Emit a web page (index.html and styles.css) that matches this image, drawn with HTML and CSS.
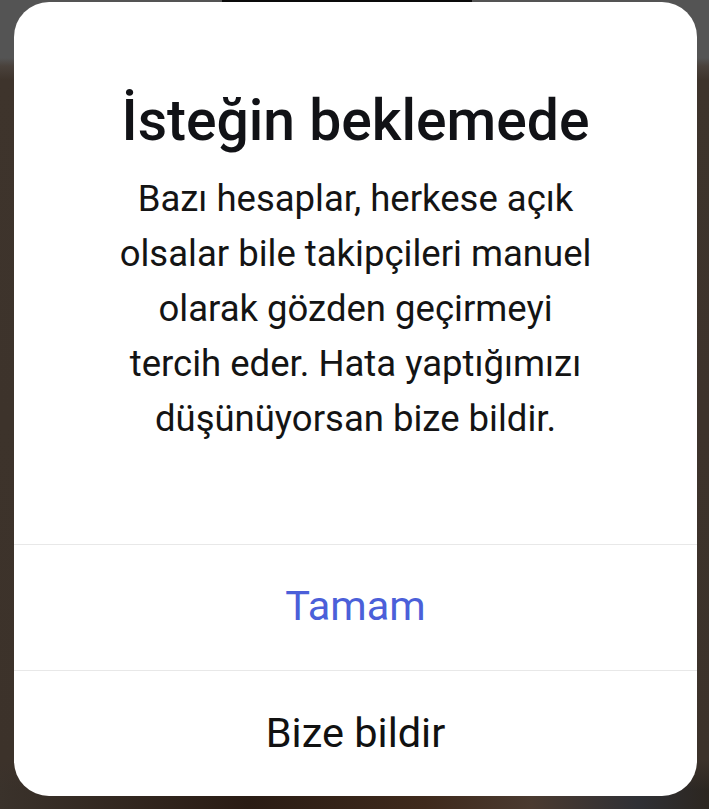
FILE: index.html
```html
<!DOCTYPE html>
<html lang="tr">
<head>
<meta charset="utf-8">
<link rel="stylesheet" href="styles.css">
</head>
<body>
<div class="backdrop">
  <div class="bg-top"><div class="bg-shape"></div></div>
  <div class="dialog">
    <div class="content">
      <h1 class="title">İsteğin beklemede</h1>
      <p class="message">Bazı hesaplar, herkese açık<br>olsalar bile takipçileri manuel<br>olarak gözden geçirmeyi<br>tercih eder. Hata yaptığımızı<br>düşünüyorsan bize bildir.</p>
    </div>
    <div class="actions">
      <button class="action primary">Tamam</button>
      <button class="action secondary">Bize bildir</button>
    </div>
  </div>
</div>
</body>
</html>
```
FILE: styles.css
```css
html, body {
  margin: 0;
  padding: 0;
  height: 100%;
}
body {
  background: linear-gradient(90deg, #3a322b 0%, #2a1c14 35%, #3f2a1c 60%, #4a3a30 75%, #2f3035 90%, #2c2620 100%);
  font-family: Roboto, "Noto Sans", "Liberation Sans", sans-serif;
  overflow: hidden;
}
.backdrop {
  position: relative;
  width: 709px;
  height: 809px;
  background: linear-gradient(180deg, #545454 0px, #545454 58px, #4a423c 66px, #3e342c 80px, #3c322a 760px, transparent 790px);
}
.bg-top {
  position: absolute;
  left: 0;
  top: 0;
  width: 709px;
  height: 4px;
}
.bg-shape {
  position: absolute;
  left: 222px;
  width: 250px;
  top: 0;
  height: 4px;
  background: #0a0a0a;
}
.dialog {
  position: absolute;
  left: 14px;
  top: 2px;
  width: 683px;
  height: 794px;
  background: #ffffff;
  border-radius: 35px;
  display: flex;
  flex-direction: column;
  overflow: hidden;
}
.content {
  flex: 1;
  padding: 86px 20px 0;
  text-align: center;
}
.title {
  margin: 0;
  font-size: 57px;
  line-height: 66px;
  font-weight: 500;
  color: #111216;
  letter-spacing: 0;
  white-space: nowrap;
}
.message {
  margin: 17px 0 0;
  font-size: 36.5px;
  line-height: 55px;
  font-weight: 400;
  color: #141414;
  white-space: nowrap;
}
.actions {
  display: flex;
  flex-direction: column;
}
.action {
  height: 126px;
  border: 0;
  border-top: 1px solid #e8e8e8;
  background: transparent;
  font-family: Roboto, "Noto Sans", "Liberation Sans", sans-serif;
  font-size: 41.5px;
  color: #111111;
  padding: 0 0 2px;
  display: flex;
  align-items: center;
  justify-content: center;
}
.action.primary {
  color: #4b5fd9;
  padding-bottom: 4px;
}
```
